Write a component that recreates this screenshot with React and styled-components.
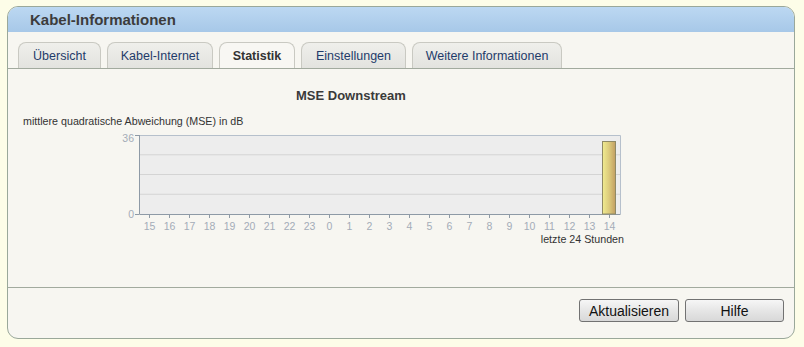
import React from "react";
import styled, { createGlobalStyle } from "styled-components";

const Global = createGlobalStyle`
  html, body { margin: 0; padding: 0; background: #fdfde8; }
  body { font-family: "Liberation Sans", Arial, sans-serif; }
`;

const Page = styled.div`
  padding: 6px 9px 10px 7px;
`;

const Panel = styled.div`
  width: 786px;
  border: 1px solid #9aa89a;
  border-radius: 11px;
  overflow: hidden;
  background: #f7f6f1;
`;

const Header = styled.div`
  height: 25px;
  background: linear-gradient(#bcd8f2, #a7c8e8);
  display: flex;
  align-items: center;
  padding-left: 22px;
  font-size: 15px;
  font-weight: bold;
  color: #3c3c3c;
`;

const TabBar = styled.div`
  display: flex;
  gap: 6px;
  padding: 10px 0 0 10px;
  border-bottom: 1px solid #a2aa9e;
`;

const Tab = styled.div`
  width: ${(p) => p.$w}px;
  height: 26px;
  box-sizing: border-box;
  display: flex;
  align-items: center;
  justify-content: center;
  border: 1px solid #c9c9c2;
  border-bottom: none;
  border-radius: 8px 8px 0 0;
  font-size: 12.5px;
  color: ${(p) => (p.$active ? "#333" : "#1f3b6a")};
  font-weight: ${(p) => (p.$active ? "bold" : "normal")};
  background: ${(p) =>
    p.$active ? "#f8f7f3" : "linear-gradient(#efefeb, #e3e3df)"};
`;

const Content = styled.div`
  height: 218px;
  border-bottom: 1px solid #a2aa9e;
  display: flex;
  flex-direction: column;
`;

const ChartTitle = styled.div`
  padding: 19px 0 0 288px;
  font-size: 13px;
  font-weight: bold;
  color: #3a3a3a;
  line-height: 16px;
`;

const AxisCaption = styled.div`
  padding: 11px 0 0 15px;
  font-size: 10.7px;
  color: #333;
  line-height: 12px;
`;

const ChartSvg = styled.svg`
  display: block;
  margin: 1px 0 0 92px;
`;

const Footer = styled.div`
  height: 50px;
  display: flex;
  justify-content: flex-end;
  align-items: flex-start;
  gap: 6px;
  padding: 11px 10px 0 0;
  box-sizing: border-box;
`;

const Button = styled.button`
  width: ${(p) => p.$w}px;
  height: 23px;
  border: 1px solid #727272;
  border-radius: 3px;
  background: linear-gradient(#f6f6f6, #e6e6e6 50%, #d8d8d8);
  font-family: "Liberation Sans", Arial, sans-serif;
  font-size: 14px;
  color: #111;
  padding: 0;
`;

const hours = [15, 16, 17, 18, 19, 20, 21, 22, 23, 0, 1, 2, 3, 4, 5, 6, 7, 8, 9, 10, 11, 12, 13, 14];

function Chart() {
  // svg origin at page x=100, y=128
  const L = 39, R = 520, T = 7, B = 86;
  const gy = [T + 19.75, T + 39.5, T + 59.25];
  const font = "Liberation Sans, Arial, sans-serif";
  return (
    <ChartSvg width="540" height="122" viewBox="0 0 540 122">
      <defs>
        <linearGradient id="bar" x1="0" x2="1" y1="0" y2="0">
          <stop offset="0" stopColor="#f0ec90" />
          <stop offset="0.5" stopColor="#dccb7c" />
          <stop offset="1" stopColor="#c29e62" />
        </linearGradient>
      </defs>
      <rect x={L} y={T} width={R - L} height={B - T} fill="#ededed" />
      {gy.map((y) => (
        <line key={y} x1={L} x2={R} y1={y} y2={y} stroke="#d4d4d4" strokeWidth="1" />
      ))}
      <path d={`M${L} ${T + 0.5} H${R + 0.5} V${B}`} stroke="#b6c0cc" fill="none" />
      <path d={`M${L + 0.5} ${T} V${B + 0.5} H${R + 0.5}`} stroke="#8e9aa6" fill="none" />
      <line x1={L - 4} x2={L} y1={T + 0.5} y2={T + 0.5} stroke="#8e9aa6" />
      <line x1={L - 4} x2={L} y1={B + 0.5} y2={B + 0.5} stroke="#8e9aa6" />
      <text x={L - 5} y={T + 7} textAnchor="end" fontSize="10.5" fill="#a4acb8" fontFamily={font}>36</text>
      <text x={L - 5} y={B + 4} textAnchor="end" fontSize="10.5" fill="#a4acb8" fontFamily={font}>0</text>
      {hours.map((h, i) => {
        const x = 49.5 + i * 20;
        return (
          <g key={i}>
            <line x1={x} x2={x} y1={B} y2={B + 4} stroke="#8e9aa6" />
            <text x={x} y={B + 16} textAnchor="middle" fontSize="10.5" fill="#a4acb8" fontFamily={font}>{h}</text>
          </g>
        );
      })}
      <rect x={502.5} y={13.5} width={13} height={B - 13.5} fill="url(#bar)" stroke="#8f8a66" />
      <text x={524} y={B + 29} textAnchor="end" fontSize="10.7" fill="#333" fontFamily={font}>letzte 24 Stunden</text>
    </ChartSvg>
  );
}

const tabs = [
  { label: "Übersicht", w: 83 },
  { label: "Kabel-Internet", w: 106 },
  { label: "Statistik", w: 76 },
  { label: "Einstellungen", w: 105 },
  { label: "Weitere Informationen", w: 150 },
];

export default function App() {
  return (
    <>
      <Global />
      <Page>
        <Panel>
          <Header>Kabel-Informationen</Header>
          <TabBar>
            {tabs.map((t) => (
              <Tab key={t.label} $w={t.w} $active={t.label === "Statistik"}>
                {t.label}
              </Tab>
            ))}
          </TabBar>
          <Content>
            <ChartTitle>MSE Downstream</ChartTitle>
            <AxisCaption>mittlere quadratische Abweichung (MSE) in dB</AxisCaption>
            <Chart />
          </Content>
          <Footer>
            <Button $w={100}>Aktualisieren</Button>
            <Button $w={99}>Hilfe</Button>
          </Footer>
        </Panel>
      </Page>
    </>
  );
}
